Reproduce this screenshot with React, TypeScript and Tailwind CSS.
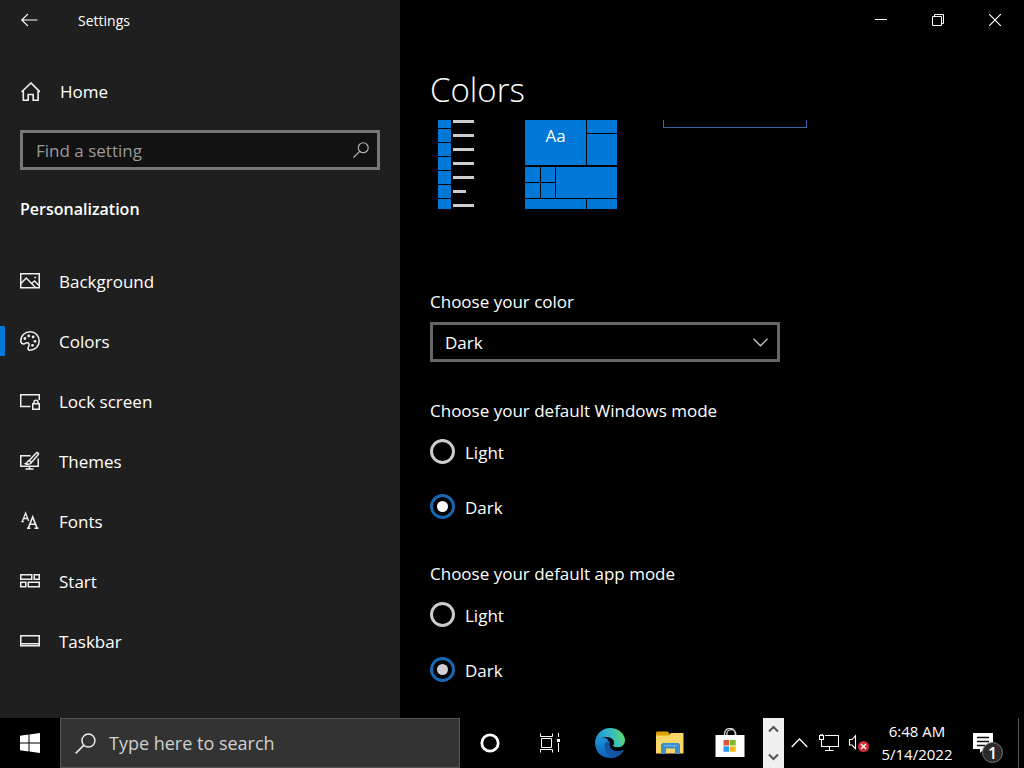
import React from "react";

const navItems = [
  { label: "Background", icon: <BackgroundIcon /> },
  { label: "Colors", icon: <PaletteIcon />, active: true },
  { label: "Lock screen", icon: <LockScreenIcon /> },
  { label: "Themes", icon: <ThemesIcon /> },
  { label: "Fonts", icon: <FontsIcon /> },
  { label: "Start", icon: <StartIcon /> },
  { label: "Taskbar", icon: <TaskbarIcon /> },
];

function BackgroundIcon() {
  return (
    <svg width="20" height="20" viewBox="0 0 20 20" fill="none" stroke="#f0f0f0" strokeWidth="1.5">
      <path d="M.75 2.75h18.500v14H.75z" />
      <path d="M1 12.500 6.200 7l9.300 9.500M11.500 12.500l3-2.500 4.500 4.500" />
      <circle cx="15.200" cy="6.500" r=".6" fill="#f0f0f0" strokeWidth=".8" />
    </svg>
  );
}

function PaletteIcon() {
  return (
    <svg width="20" height="20" viewBox="0 0 20 20" fill="none" stroke="#f0f0f0" strokeWidth="1.5">
      <path d="M.8 9.800C.8 4.500 5 .8 10.300.8c5 0 8.900 4 8.900 9.100 0 5.200-4 9.300-9.300 9.300-1.500 0-2.200-.9-1.800-2.300.5-1.700 1.400-2.400.9-3.900-.5-1.400-2-1.700-3.300-.9-1 .6-1.800 1-3 .7C1.300 12.500.8 11.200.8 9.800z" />
      <g fill="#f0f0f0" stroke="none">
        <circle cx="4.900" cy="7.500" r="1.400" />
        <circle cx="8.700" cy="4.900" r="1.400" />
        <circle cx="13.100" cy="6" r="1.400" />
        <circle cx="15" cy="10.300" r="1.400" />
        <circle cx="12.500" cy="14.300" r="1.400" />
      </g>
    </svg>
  );
}

function LockScreenIcon() {
  return (
    <svg width="20" height="20" viewBox="0 0 20 20" fill="none" stroke="#f0f0f0" strokeWidth="1.5">
      <path d="M10.500 15.500H.75V3.750h18.500V9" />
      <path d="M12.750 12.750h6.500v5.500h-6.500zM14 12.500v-1.300a2 2 0 0 1 4 0v1.300" />
    </svg>
  );
}

function ThemesIcon() {
  return (
    <svg width="20" height="20" viewBox="0 0 20 20" fill="none" stroke="#f0f0f0" strokeWidth="1.5">
      <path d="M10.500 4.750H.75v10.500h17.500V7.500M9.500 15v3M5.500 18h8" />
      <path d="m9.200 9.400 6.800-7.100c1.600-1.600 3.300.1 1.900 1.700l-6.500 7.400zM9.200 9.400c-1.900.3-1.500 2.400-3.700 3.300 2.300 1 5.400.6 5.900-1.300" />
    </svg>
  );
}

function FontsIcon() {
  return (
    <svg width="20" height="20" viewBox="0 0 20 20" fill="none" stroke="#f0f0f0">
      <path strokeWidth="1.300" d="M2.300 10.500 5.600 2l3 8M3.500 7.500h4M1.300 10.700h2.500" />
      <path strokeWidth="1.600" d="m8.300 17 4.400-11 4.300 11M9.800 13.300h5.700M7 17.300h3.500M14.500 17.300h4" />
    </svg>
  );
}

function StartIcon() {
  return (
    <svg width="20" height="20" viewBox="0 0 20 20" fill="none" stroke="#f0f0f0" strokeWidth="1.5">
      <path d="M.75 3.750h11v4.500h-11zM14.250 3.750h5v4.500h-5zM.75 11.250h5v4.500h-5zM8.250 11.250h11v4.500h-11z" />
    </svg>
  );
}

function TaskbarIcon() {
  return (
    <svg width="20" height="20" viewBox="0 0 20 20" fill="none" stroke="#f0f0f0" strokeWidth="1.5">
      <path d="M.75 4.750h18.500v10H.75zM1 12.800h18" />
    </svg>
  );
}

function SearchIcon({ size, color }: { size: number; color: string }) {
  return (
    <svg width={size} height={size} viewBox="0 0 20 20" fill="none" stroke={color} strokeWidth="1.4">
      <circle cx="12.800" cy="7.200" r="6.200" />
      <path d="M8.300 11.800.6 19.400" />
    </svg>
  );
}

const Sidebar = () => (
  <aside className="flex w-[400px] shrink-0 flex-col bg-[#1f1f1f]">
    <header className="flex h-10 items-center gap-10 pl-5">
      <button aria-label="Back" className="flex h-10 w-[18px] items-center">
        <svg width="18" height="14" viewBox="0 0 18 14" fill="none" stroke="#fff" strokeWidth="1.2">
          <path d="M2 7h15.500M8 .8 1.800 7 8 13.200" />
        </svg>
      </button>
      <h1 className="pt-0.5 text-sm">Settings</h1>
    </header>

    <a href="#home" className="mt-[22px] flex h-[60px] items-center gap-5 pl-5">
      <svg width="20" height="20" viewBox="0 0 20 20" fill="none" stroke="#f0f0f0" strokeWidth="1.6">
        <path d="M1.500 10 11 1l9 9" />
        <path d="M3.300 8.700v9.500h4.900v-5.700h5v5.700h4.900V8.700" />
      </svg>
      Home
    </a>

    <form className="mx-5 mt-2 flex h-10 items-center border-3 border-[#767676] bg-[#121212] pr-2">
      <input
        type="text"
        aria-label="Find a setting"
        placeholder="Find a setting"
        className="min-w-0 flex-1 bg-transparent pt-0.5 pl-[13px] outline-none placeholder:text-[#9a9a9a]"
      />
      <SearchIcon size={16} color="#b8b8b8" />
    </form>

    <h2 className="mt-[25px] pl-5 text-base leading-7 font-semibold">Personalization</h2>

    <nav className="mt-7">
      {navItems.map((item) => (
        <a
          key={item.label}
          href={"#" + item.label}
          aria-current={item.active ? "page" : undefined}
          className="flex h-[60px] items-center"
        >
          <span className={item.active ? "h-[30px] w-[5px] bg-[#0078d7]" : "w-[5px]"} />
          <span className="mr-[19px] ml-[15px]">{item.icon}</span>
          <span className="pt-0.5">{item.label}</span>
        </a>
      ))}
    </nav>
  </aside>
);

const WindowButtons = () => (
  <div className="flex justify-end pr-px">
    <button aria-label="Minimize" className="flex h-10 w-[57px] items-center justify-center">
      <svg width="12" height="12" viewBox="0 0 12 12" stroke="#fff">
        <path d="M0 5.500h12" />
      </svg>
    </button>
    <button aria-label="Restore" className="flex h-10 w-[57px] items-center justify-center">
      <svg width="12" height="12" viewBox="0 0 12 12" fill="none" stroke="#fff">
        <path d="M.5 2.500h9v9h-9zM2.500 2.500v-2h9v9h-2" />
      </svg>
    </button>
    <button aria-label="Close" className="flex h-10 w-[57px] items-center justify-center">
      <svg width="12" height="12" viewBox="0 0 12 12" stroke="#fff" strokeWidth="1.2">
        <path d="m0 0 12 12M12 0 0 12" />
      </svg>
    </button>
  </div>
);

// bottom part of the desktop preview, the rest is scrolled out of view
const Preview = () => (
  <div className="flex h-[90px] items-start pl-2">
    <div className="flex w-[13px] flex-col gap-px">
      <div className="h-2 bg-[#0078d7]" />
      {[1, 2, 3, 4, 5].map((n) => (
        <div key={n} className="h-[13px] bg-[#0078d7]" />
      ))}
      <div className="h-[10px] bg-[#0078d7]" />
    </div>
    <div className="ml-0.5 flex w-[21px] flex-col gap-[11px]">
      {[1, 2, 3, 4, 5].map((n) => (
        <div key={n} className="h-[3px] bg-[#cccccc]" />
      ))}
      <div className="h-[3px] w-[13px] bg-[#cccccc]" />
      <div className="h-[3px] bg-[#cccccc]" />
    </div>

    <div className="ml-[51px] flex flex-col gap-0.5">
      <div className="grid grid-cols-[61px_30px] grid-rows-[13px_31px] gap-px">
        <div className="row-span-2 bg-[#0078d7] pt-1 text-center leading-6">Aa</div>
        <div className="bg-[#0078d7]" />
        <div className="bg-[#0078d7]" />
      </div>
      <div className="grid grid-cols-[15px_14px_30px_30px] grid-rows-[15px_15px_10px] gap-px">
        <div className="bg-[#0078d7]" />
        <div className="bg-[#0078d7]" />
        <div className="col-span-2 row-span-2 bg-[#0078d7]" />
        <div className="bg-[#0078d7]" />
        <div className="bg-[#0078d7]" />
        <div className="col-span-3 bg-[#0078d7]" />
        <div className="bg-[#0078d7]" />
      </div>
    </div>

    <div className="ml-[46px] h-2 w-36 border border-t-0 border-[#3c62a8]" />
  </div>
);

const ModeGroup = ({ title, name, dot }: { title: string; name: string; dot: string }) => (
  <fieldset>
    <legend className="leading-6">{title}</legend>
    {["Light", "Dark"].map((mode) => (
      <label key={mode} className="mt-4 mb-[30px] flex h-[25px] items-center gap-[10px] last:mb-0">
        <input
          type="radio"
          name={name}
          defaultChecked={mode === "Dark"}
          className={
            "grid size-[25px] appearance-none place-content-center rounded-full border-3 border-[#cccccc] before:size-[11px] before:rounded-full checked:border-[#1769b3] " +
            dot
          }
        />
        <span className="pt-0.5">{mode}</span>
      </label>
    ))}
  </fieldset>
);

const Content = () => (
  <main className="flex min-w-0 flex-1 flex-col bg-black">
    <WindowButtons />
    <div className="pl-[30px]">
      <h2 className="mt-[26px] h-[54px] text-[33px] leading-[48px] font-light">Colors</h2>
      <Preview />
      <label htmlFor="color-mode" className="mt-20 block leading-6">
        Choose your color
      </label>
      <div className="relative mt-2 w-[350px]">
        <select
          id="color-mode"
          defaultValue="Dark"
          className="h-10 w-full appearance-none border-3 border-[#666666] bg-black pt-0.5 pl-3"
        >
          <option>Light</option>
          <option>Dark</option>
          <option>Custom</option>
        </select>
        <svg
          className="pointer-events-none absolute top-4 right-3"
          width="15"
          height="9"
          viewBox="0 0 15 9"
          fill="none"
          stroke="#c8c8c8"
          strokeWidth="1.3"
        >
          <path d="m.5.8 7 7 7-7" />
        </svg>
      </div>
      <div className="mt-[37px] flex flex-col gap-[43px]">
        <ModeGroup title="Choose your default Windows mode" name="windows-mode" dot="checked:before:bg-white" />
        <ModeGroup title="Choose your default app mode" name="app-mode" dot="checked:before:bg-[#cfcfd4]" />
      </div>
    </div>
  </main>
);

function EdgeIcon() {
  return (
    <svg width="30" height="30" viewBox="0 0 30 30">
      <defs>
        <linearGradient id="edge-top" x1="0" y1=".6" x2="1" y2=".4">
          <stop offset="0" stopColor="#1b8fd8" />
          <stop offset=".5" stopColor="#2fb5cc" />
          <stop offset="1" stopColor="#5fdc6c" />
        </linearGradient>
        <linearGradient id="edge-left" x1="0" y1="0" x2=".3" y2="1">
          <stop offset="0" stopColor="#2195de" />
          <stop offset="1" stopColor="#0c5fb4" />
        </linearGradient>
      </defs>
      <path
        fill="url(#edge-left)"
        d="M.2 13C-.8 23 6 30 15.500 30c6 0 10.500-3 12.700-7.300.3-.6-.2-.9-.8-.6-6.400 3-12.600-.3-12.900-6.100C14.300 10.500 7 5.500.2 13z"
      />
      <path
        fill="#10559f"
        d="M9.500 17.500c0 6.500 4.500 11.800 10.500 11.400 3.700-1.200 6.500-3.400 8.200-6.200.3-.6-.2-.9-.8-.6-6.400 3-12.600-.3-12.900-6.100 0-1.300.3-2.200.8-3-3 .1-5.800 1.800-5.800 4.500z"
      />
      <path
        fill="url(#edge-top)"
        d="M.2 14C1 5.500 7.500 0 15 0c9 0 15 6.500 15 12.300 0 4.600-3.500 7.200-7.500 7.200-2.800 0-4.600-1-4.600-1.900 0-.8 1.100-1.300 1.100-3.100 0-2.900-3-5.500-7.500-5.500C6.500 9 2 10.500.2 14z"
      />
      <path fill="#000" d="M14.600 16c-.2-2.400 1-3.800 2.600-3.800 1.200.9 1.800 2 1.800 3.100 0 1.300-1.100 1.700-1.100 2.300 0 1.300 2.300 2.300 5.800 1.900 2-.3 3.900-1.300 5-2.600-.4 2.500-.8 3.800-1.800 5.300-6 2.500-12-.5-12.300-6.200z" />
    </svg>
  );
}

function FolderIcon() {
  return (
    <svg width="28" height="24" viewBox="0 0 28 24">
      <path fill="#e0a100" d="M0 1.500.8.500h11l2 2.500V7H0z" />
      <path fill="#fbd768" d="M0 4.500h13L15 2h12.500v20.500H0z" />
      <path fill="#3c8fc9" d="M5 13.500 6.500 12h16L24 13.500V23h-5v-5.500h-9V23H5z" />
      <path fill="#66b1de" d="M8 14h13v1.300H8z" />
    </svg>
  );
}

function StoreIcon() {
  return (
    <svg width="30" height="30" viewBox="0 0 30 30">
      <path
        fill="none"
        stroke="#d8d8d8"
        strokeWidth="1.3"
        d="M9.500 8V5.800a5.400 5.400 0 0 1 10.800 0V8M11.800 8V6.200a4.500 4.500 0 0 1 9 0V8"
      />
      <path fill="#fff" d="M.5 7h29v22H.5z" />
      <path fill="#e1533b" d="M8.500 12h5.700v5.500H8.500z" />
      <path fill="#7db928" d="M15 12h5.700v5.500H15z" />
      <path fill="#2a9bea" d="M8.500 18.300h5.700v5.500H8.500z" />
      <path fill="#f8b81c" d="M15 18.300h5.700v5.500H15z" />
    </svg>
  );
}

const taskButtons = [
  {
    label: "Cortana",
    icon: (
      <svg width="20" height="20" viewBox="0 0 20 20" fill="none" stroke="#fff" strokeWidth="2.8">
        <circle cx="10" cy="10" r="8.200" />
      </svg>
    ),
  },
  {
    label: "Task View",
    icon: (
      <svg width="20" height="20" viewBox="0 0 20 20" fill="none" stroke="#fff">
        <path d="M.5.5v3h12v-3M1.500 5.500h10v9h-10zM.5 19.500v-3h12v3M18.500 0v4M18.500 10v9" />
        <path fill="#fff" stroke="none" d="M17 6h3v3h-3z" />
      </svg>
    ),
  },
  { label: "Microsoft Edge", icon: <EdgeIcon /> },
  { label: "File Explorer", icon: <FolderIcon /> },
  { label: "Microsoft Store", icon: <StoreIcon /> },
];

const Taskbar = () => (
  <footer className="flex h-[50px] shrink-0 bg-black">
    <button aria-label="Start" className="flex w-[60px] items-center justify-center">
      <svg width="20" height="20" viewBox="0 0 20 20" fill="#fff">
        <path d="M0 2.800 8.500 1.500v8H0zM9.500 1.400 20 0v9.500H9.500zM0 10.500h8.500v8L0 17.300zM9.500 10.500H20V20L9.500 18.600z" />
      </svg>
    </button>
    <label className="flex w-[400px] items-center gap-[13px] border border-[#555555] bg-[#333333] pl-[14px]">
      <SearchIcon size={21} color="#eeeeee" />
      <input
        type="text"
        aria-label="Type here to search"
        placeholder="Type here to search"
        className="min-w-0 flex-1 bg-transparent text-lg outline-none placeholder:text-[#d0d0d0]"
      />
    </label>
    {taskButtons.map((b) => (
      <button key={b.label} aria-label={b.label} className="flex w-[60px] items-center justify-center">
        {b.icon}
      </button>
    ))}

    <div className="ml-auto flex">
      <div className="flex w-[21px] flex-col items-center justify-between bg-[#f0f0f0] py-[7px]">
        <button aria-label="Scroll up">
          <svg className="block" width="11" height="8" viewBox="0 0 11 8" fill="none" stroke="#555" strokeWidth="2">
            <path d="m1 6.500 4.500-4.500L10 6.500" />
          </svg>
        </button>
        <button aria-label="Scroll down">
          <svg className="block" width="11" height="8" viewBox="0 0 11 8" fill="none" stroke="#555" strokeWidth="2">
            <path d="m1 1.500 4.500 4.500L10 1.500" />
          </svg>
        </button>
      </div>
      <button aria-label="Show hidden icons" className="flex w-[30px] items-center justify-center">
        <svg width="17" height="10" viewBox="0 0 17 10" fill="none" stroke="#fff" strokeWidth="1.3">
          <path d="m.7 9 7.800-8 7.800 8" />
        </svg>
      </button>
      <button aria-label="Network" className="flex w-[30px] items-center justify-center">
        <svg width="20" height="18" viewBox="0 0 20 18" fill="none" stroke="#fff" strokeWidth="1.1">
          <path d="M6 1.500h13.500v11h-17V8M.5 1.500h4v4h-4zM2.500 5.500V8M10.500 12.500V16M6 16.500h8.500M1.800 1V0M3.500 1V0" />
        </svg>
      </button>
      <button aria-label="Volume muted" className="flex w-[30px] items-center justify-center">
        <svg width="22" height="20" viewBox="0 0 22 20" fill="none" stroke="#fff" strokeWidth="1.1">
          <path d="M1.500 6.500H4l3.500-3.800v13L4 12H1.500z" />
          <circle cx="15.500" cy="13.500" r="5.500" fill="#d12b3a" stroke="none" />
          <path strokeWidth="1.4" d="m13 11 5 5M18 11l-5 5" />
        </svg>
      </button>
      <div className="flex w-[86px] flex-col items-center pt-0.5 text-[15px] leading-[23px]">
        <span>6:48 AM</span>
        <span>5/14/2022</span>
      </div>
      <button aria-label="Notifications" className="flex w-[58px] items-center pl-[13px]">
        <span className="relative">
          <svg className="block" width="20" height="20" viewBox="0 0 20 20">
            <path fill="#fff" d="M0 0h20v16h-9l-4 4v-4H0z" />
            <path stroke="#111" strokeWidth="1.3" d="M4 4.500h12M4 8.500h12M4 12.500h8" />
          </svg>
          <span className="absolute top-[9px] left-[9px] flex size-[21px] items-center justify-center rounded-full border border-[#777777] bg-[#2b2b2b] text-base leading-none font-semibold">
            1
          </span>
        </span>
      </button>
      <div className="mr-[5px] w-px bg-[#555555]" />
    </div>
  </footer>
);

const App = () => {
  return (
    <div className="flex min-h-screen flex-col bg-black font-['Open_Sans','Noto_Sans',sans-serif] text-[17px] text-white">
      <div className="flex flex-1">
        <Sidebar />
        <Content />
      </div>
      <Taskbar />
    </div>
  );
};

export default App;
